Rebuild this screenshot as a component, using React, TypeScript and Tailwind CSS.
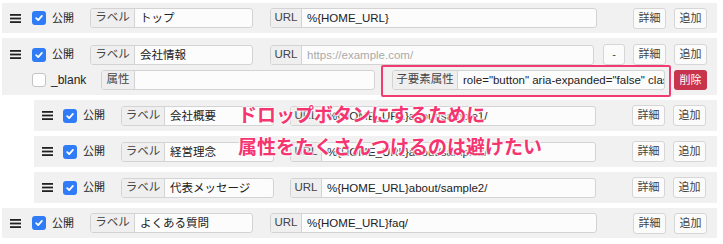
import type { ReactNode } from "react";

type GroupProps = {
  label: string;
  value?: string;
  placeholder?: string;
  className: string;
  addonClass: string;
};

function Grip() {
  return (
    <svg width="11" height="9" viewBox="0 0 11 9" className="shrink-0">
      <rect x="0" y="0" width="11" height="1.8" fill="#222" />
      <rect x="0" y="3.6" width="11" height="1.8" fill="#222" />
      <rect x="0" y="7.2" width="11" height="1.8" fill="#222" />
    </svg>
  );
}

function Check({ on = true }: { on?: boolean }) {
  if (!on) {
    return <span className="block h-[14px] w-[14px] shrink-0 rounded-[3px] border border-[#c4c4c4] bg-white" />;
  }
  return (
    <span className="grid h-[14px] w-[14px] shrink-0 place-items-center rounded-[3px] bg-[#2f7cf6]">
      <svg width="10" height="10" viewBox="0 0 10 10">
        <path d="M2.2 5.2 L4.2 7.1 L7.9 2.9" fill="none" stroke="white" strokeWidth="1.8" strokeLinecap="round" strokeLinejoin="round" />
      </svg>
    </span>
  );
}

function Group({ label, value, placeholder, className, addonClass }: GroupProps) {
  return (
    <div className={`flex h-5 shrink-0 overflow-hidden rounded-[3px] border border-[#d3d3d3] bg-[#fcfcfc] ${className}`}>
      <span className={`flex shrink-0 items-center justify-center border-r border-[#d3d3d3] bg-[#efefef] text-[#444] ${addonClass}`}>
        {label}
      </span>
      <span className={`flex-1 overflow-hidden whitespace-nowrap pl-[5px] leading-[18px] ${value ? "text-[#222]" : "text-[#aaa]"}`}>
        {value ?? placeholder}
      </span>
    </div>
  );
}

function Btn({ children, className = "", narrow = false }: { children: ReactNode; className?: string; narrow?: boolean }) {
  return (
    <span
      className={`flex h-[21px] shrink-0 items-center justify-center rounded-[3px] border border-[#d6d6d6] bg-[#fbfbfb] text-[11px] text-[#444] ${
        narrow ? "w-[22px]" : "w-[33px]"
      } ${className}`}
    >
      {children}
    </span>
  );
}

function Row({
  nested = false,
  label,
  url,
  placeholder,
}: {
  nested?: boolean;
  label: string;
  url?: string;
  placeholder?: string;
}) {
  return (
    <div
      className={`flex items-center bg-[#f1f1f1] ${
        nested ? "ml-[34px] mr-[6px] h-[31px]" : "ml-[2px] mr-[6px] h-[30px]"
      }`}
    >
      <span className="ml-[8px]">
        <Grip />
      </span>
      <span className={nested ? "ml-[10px]" : "ml-[11px]"}>
        <Check />
      </span>
      <span className="ml-[6px] w-[38px] text-[11px] text-[#222]">公開</span>
      {nested ? (
        <Group label="ラベル" value={label} className="w-[153px]" addonClass="w-[43px]" />
      ) : (
        <Group label="ラベル" value={label} className="w-[163px]" addonClass="w-[44px]" />
      )}
      <Group
        label="URL"
        value={url}
        placeholder={placeholder}
        className={nested ? "ml-[16px] w-[306px]" : "ml-[17px] w-[327px]"}
        addonClass="w-[31px]"
      />
      <Btn className="ml-[36px]">詳細</Btn>
      <Btn className="ml-[8px]">追加</Btn>
    </div>
  );
}

export default function App() {
  return (
    <div className="relative h-[244px] w-[723px] overflow-hidden bg-white pt-[3px] text-[11.5px] [font-family:'Liberation_Sans','Noto_Sans_CJK_JP',sans-serif]">
      <div className="flex flex-col gap-[5px]">
        <Row label="トップ" url="%{HOME_URL}" />

        <div className="relative ml-[2px] mr-[6px] flex h-[57px] flex-col gap-[5px] bg-[#f1f1f1] pt-[6px]">
          <div className="flex items-center">
            <span className="ml-[8px]">
              <Grip />
            </span>
            <span className="ml-[11px]">
              <Check />
            </span>
            <span className="ml-[6px] w-[38px] text-[11px] text-[#222]">公開</span>
            <Group label="ラベル" value="会社情報" className="w-[163px]" addonClass="w-[44px]" />
            <Group
              label="URL"
              placeholder="https://example.com/"
              className="ml-[17px] w-[324px]"
              addonClass="w-[31px]"
            />
            <Btn narrow className="ml-[9px]">-</Btn>
            <Btn className="ml-[8px]">詳細</Btn>
            <Btn className="ml-[8px]">追加</Btn>
          </div>
          <div className="flex items-center">
            <span className="ml-[30px]">
              <Check on={false} />
            </span>
            <span className="ml-[5px] w-[50px] text-[12px] text-[#222]">_blank</span>
            <Group label="属性" value="" className="w-[274px]" addonClass="w-[33px]" />
            <Group
              label="子要素属性"
              value={'role="button" aria-expanded="false" class="dropdown-toggle"'}
              className="ml-[17px] w-[273px]"
              addonClass="w-[65px]"
            />
            <span className="ml-[9px] flex h-5 w-[33px] shrink-0 items-center justify-center rounded-[3px] bg-[#c8344b] text-[11px] text-white">
              削除
            </span>
          </div>
          <div className="absolute left-[379px] top-[27px] h-[32px] w-[290px] rounded-[2px] border-2 border-[#f33b72]" />
        </div>

        <Row nested label="会社概要" url="%{HOME_URL}about/sample1/" />
        <Row nested label="経営理念" url="%{HOME_URL}about/sample2/" />
        <Row nested label="代表メッセージ" url="%{HOME_URL}about/sample2/" />
        <Row label="よくある質問" url="%{HOME_URL}faq/" />
      </div>

      <div className="absolute left-[238px] top-[98px] text-[19px] font-bold leading-[32px] text-[#f5356f] [font-family:'Noto_Sans_CJK_JP',sans-serif] [text-shadow:0_0_2px_white,0_0_2px_white,0_0_3px_white,0_0_3px_white]">
        <p>ドロップボタンにするために</p>
        <p>属性をたくさんつけるのは避けたい</p>
      </div>
    </div>
  );
}
